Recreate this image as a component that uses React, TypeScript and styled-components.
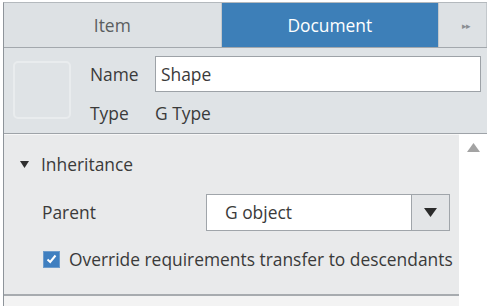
import React from "react";
import styled, { createGlobalStyle } from "styled-components";

const Global = createGlobalStyle`
  html, body { margin: 0; padding: 0; background: #ffffff; }
  body { font-family: "Open Sans", "Noto Sans", sans-serif; color: #3a3a3a; }
`;

const FS = "17.4px";

const Panel = styled.div`
  margin: 2px 0 0 3px;
  width: 484px;
  height: 304px;
  display: flex;
  flex-direction: column;
  border-left: 1px solid #8e949a;
  border-top: 1px solid #b4b9bd;
  box-sizing: border-box;
  overflow: hidden;
`;

const TabBar = styled.div`
  display: flex;
  height: 45px;
  border-bottom: 1px solid #a3a8ad;
  box-sizing: border-box;
  background: #dde1e4;
`;

const Tab = styled.div<{ $active?: boolean; $w: number }>`
  width: ${(p) => p.$w}px;
  display: flex;
  align-items: center;
  justify-content: center;
  font-size: ${FS};
  color: ${(p) => (p.$active ? "#ffffff" : "#5a5d60")};
  background: ${(p) => (p.$active ? "#3d7fb8" : "#dde1e4")};
  border-right: 1px solid #c3c8cc;
  box-sizing: border-box;
  padding-bottom: 1px;
`;

const More = styled.div`
  width: 48px;
  display: flex;
  align-items: center;
  justify-content: center;
  padding-left: 6px;
  font-size: 9px;
  color: #8a8e92;
  letter-spacing: -1px;
  border-right: 1px solid #c3c8cc;
  box-sizing: border-box;
`;

const Header = styled.div`
  height: 86px;
  display: flex;
  align-items: flex-start;
  padding: 8px 6px 0 9px;
  background: #dfe3e6;
  border-bottom: 1px solid #9ea3a8;
  box-sizing: border-box;
`;

const Swatch = styled.div`
  width: 58px;
  height: 58px;
  margin-top: 5px;
  border: 2px solid #e9ecee;
  border-radius: 5px;
  box-sizing: border-box;
  background: #dfe3e6;
`;

const Fields = styled.div`
  flex: 1;
  margin-left: 19px;
  display: grid;
  grid-template-columns: 65px 1fr;
  grid-template-rows: 36px 42px;
  align-items: center;
`;

const Label = styled.div`
  font-size: ${FS};
  color: #3a3a3a;
`;

const TextInput = styled.div`
  height: 36px;
  border: 1px solid #9da2a7;
  background: #ffffff;
  display: flex;
  align-items: center;
  padding-left: 5px;
  font-size: ${FS};
  box-sizing: border-box;
`;

const Body = styled.div`
  flex: 1;
  display: flex;
`;

const Content = styled.div`
  width: 455px;
  display: flex;
  flex-direction: column;
`;

const Section = styled.div`
  height: 162px;
  background: #e9eaeb;
  border-top: 1px solid #f7f7f7;
  border-bottom: 2px solid #a7abaf;
  box-sizing: border-box;
  padding: 0 0 0 16px;
  display: flex;
  flex-direction: column;
`;

const SectionTitle = styled.div`
  height: 54px;
  display: flex;
  align-items: center;
  gap: 12px;
  font-size: ${FS};
  padding-top: 4px;
  box-sizing: border-box;
`;

const Row = styled.div`
  display: flex;
  align-items: center;
  padding-left: 22px;
`;

const ParentRow = styled(Row)`
  height: 38px;
  margin-top: 4px;
`;

const RowLabel = styled.div`
  width: 164px;
  font-size: ${FS};
`;

const Select = styled.div`
  width: 244px;
  height: 37px;
  display: flex;
  border: 1px solid #a0a5aa;
  box-sizing: border-box;
  background: #ffffff;
`;

const SelectValue = styled.div`
  flex: 1;
  display: flex;
  align-items: center;
  padding-left: 18px;
  font-size: ${FS};
`;

const SelectButton = styled.div`
  width: 37px;
  display: flex;
  align-items: center;
  justify-content: center;
  background: #e3e5e7;
  border-left: 1px solid #a0a5aa;
`;

const CheckRow = styled(Row)`
  height: 22px;
  margin-top: 17px;
  gap: 9px;
  padding-left: 23px;
  font-size: ${FS};
  white-space: nowrap;
`;

const CheckBox = styled.div`
  width: 17px;
  height: 17px;
  flex: none;
  background: #3f7fc0;
  border: 1px solid #6d9ccc;
  box-sizing: border-box;
  display: flex;
  align-items: center;
  justify-content: center;
`;

const Below = styled.div`
  flex: 1;
  background: #f3f3f3;
`;

const Scroll = styled.div`
  flex: 1;
  background: #ffffff;
  display: flex;
  justify-content: center;
  padding-top: 9px;
`;

export default function App() {
  return (
    <>
      <Global />
      <Panel>
        <TabBar>
          <Tab $w={218}>Item</Tab>
          <Tab $w={218} $active>
            Document
          </Tab>
          <More>▸▸</More>
        </TabBar>
        <Header>
          <Swatch />
          <Fields>
            <Label>Name</Label>
            <TextInput>Shape</TextInput>
            <Label>Type</Label>
            <Label>G Type</Label>
          </Fields>
        </Header>
        <Body>
          <Content>
            <Section>
              <SectionTitle>
                <svg width="9" height="7" viewBox="0 0 9 7">
                  <path d="M0 0 H9 L4.5 7 Z" fill="#2f2f2f" />
                </svg>
                Inheritance
              </SectionTitle>
              <ParentRow>
                <RowLabel>Parent</RowLabel>
                <Select>
                  <SelectValue>G object</SelectValue>
                  <SelectButton>
                    <svg width="13" height="9" viewBox="0 0 13 9">
                      <path d="M0 0 H13 L6.5 9 Z" fill="#2b2b2b" />
                    </svg>
                  </SelectButton>
                </Select>
              </ParentRow>
              <CheckRow>
                <CheckBox>
                  <svg width="11" height="10" viewBox="0 0 11 10">
                    <path d="M1.5 5.5 L4.2 8 L9.5 1.5" stroke="#ffffff" strokeWidth="2" fill="none" />
                  </svg>
                </CheckBox>
                Override requirements transfer to descendants
              </CheckRow>
            </Section>
            <Below />
          </Content>
          <Scroll>
            <svg width="13" height="9" viewBox="0 0 13 9">
              <path d="M6.5 0 L13 9 H0 Z" fill="#a3a3a3" />
            </svg>
          </Scroll>
        </Body>
      </Panel>
    </>
  );
}
